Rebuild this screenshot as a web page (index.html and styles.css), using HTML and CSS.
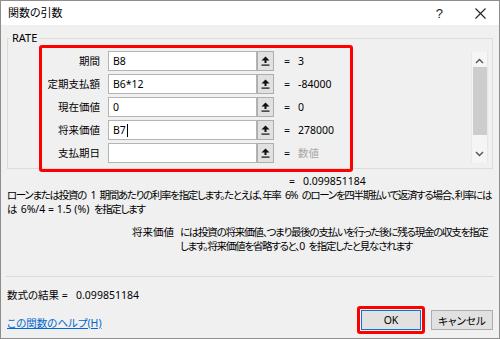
FILE: index.html
```html
<!DOCTYPE html>
<html lang="ja">
<head>
    <meta charset="UTF-8">
    <title>関数の引数</title>
    <link rel="stylesheet" href="styles.css">
</head>
<body>
    <div class="window">
        <div class="titlebar">
            <span class="title">関数の引数</span>
            <span class="help-icon">?</span>
            <svg class="close-icon" width="11" height="11" viewBox="0 0 11 11">
                <path d="M0.5 0.5 L10.5 10.5 M10.5 0.5 L0.5 10.5" stroke="#222" stroke-width="1.1" fill="none"/>
            </svg>
        </div>
        <div class="content">
            <fieldset class="group">
                <legend>RATE</legend>
                <div class="group-inner">
                    <div class="args">
                        <div class="arg-row">
                            <label class="arg-label">期間</label>
                            <div class="arg-input">B8</div>
                            <button class="ref-btn"><svg width="9" height="10" viewBox="0 0 9 10"><path d="M4.5 0.5 L8.5 4.5 L5.5 4.5 L5.5 7 L3.5 7 L3.5 4.5 L0.5 4.5 Z" fill="#111"/><rect x="0.5" y="8.5" width="8" height="1.2" fill="#111"/></svg></button>
                            <span class="eq">=</span>
                            <span class="arg-value">3</span>
                        </div>
                        <div class="arg-row">
                            <label class="arg-label">定期支払額</label>
                            <div class="arg-input">B6*12</div>
                            <button class="ref-btn"><svg width="9" height="10" viewBox="0 0 9 10"><path d="M4.5 0.5 L8.5 4.5 L5.5 4.5 L5.5 7 L3.5 7 L3.5 4.5 L0.5 4.5 Z" fill="#111"/><rect x="0.5" y="8.5" width="8" height="1.2" fill="#111"/></svg></button>
                            <span class="eq">=</span>
                            <span class="arg-value">-84000</span>
                        </div>
                        <div class="arg-row">
                            <label class="arg-label">現在価値</label>
                            <div class="arg-input">0</div>
                            <button class="ref-btn"><svg width="9" height="10" viewBox="0 0 9 10"><path d="M4.5 0.5 L8.5 4.5 L5.5 4.5 L5.5 7 L3.5 7 L3.5 4.5 L0.5 4.5 Z" fill="#111"/><rect x="0.5" y="8.5" width="8" height="1.2" fill="#111"/></svg></button>
                            <span class="eq">=</span>
                            <span class="arg-value">0</span>
                        </div>
                        <div class="arg-row">
                            <label class="arg-label">将来価値</label>
                            <div class="arg-input">B7<span class="caret"></span></div>
                            <button class="ref-btn"><svg width="9" height="10" viewBox="0 0 9 10"><path d="M4.5 0.5 L8.5 4.5 L5.5 4.5 L5.5 7 L3.5 7 L3.5 4.5 L0.5 4.5 Z" fill="#111"/><rect x="0.5" y="8.5" width="8" height="1.2" fill="#111"/></svg></button>
                            <span class="eq">=</span>
                            <span class="arg-value">278000</span>
                        </div>
                        <div class="arg-row">
                            <label class="arg-label">支払期日</label>
                            <div class="arg-input"></div>
                            <button class="ref-btn"><svg width="9" height="10" viewBox="0 0 9 10"><path d="M4.5 0.5 L8.5 4.5 L5.5 4.5 L5.5 7 L3.5 7 L3.5 4.5 L0.5 4.5 Z" fill="#111"/><rect x="0.5" y="8.5" width="8" height="1.2" fill="#111"/></svg></button>
                            <span class="eq">=</span>
                            <span class="arg-value muted">数値</span>
                        </div>
                    </div>
                    <div class="scrollbar">
                        <svg class="chevron" width="9" height="6" viewBox="0 0 9 6"><path d="M1 5 L4.5 1.5 L8 5" stroke="#555" stroke-width="1.4" fill="none"/></svg>
                        <div class="thumb"></div>
                        <svg class="chevron down" width="9" height="6" viewBox="0 0 9 6"><path d="M1 1 L4.5 4.5 L8 1" stroke="#555" stroke-width="1.4" fill="none"/></svg>
                    </div>
                </div>
            </fieldset>

            <div class="result-row">
                <span class="eq">=</span>
                <span class="arg-value">0.099851184</span>
            </div>

            <p class="desc">ローンまたは投資の 1 期間あたりの利率を指定します。たとえば、年率 6% のローンを四半期払いで返済する場合、利率には<br>は <span class="latin">6%/4 = 1.5 (%)</span> を指定します</p>

            <div class="param-desc">
                <span class="param-name">将来価値</span>
                <span class="param-text">には投資の将来価値、つまり最後の支払いを行った後に残る現金の収支を指定<br>します。将来価値を省略すると、0 を指定したと見なされます</span>
            </div>

            <div class="separator"></div>

            <div class="formula">数式の結果 =&nbsp;&nbsp; 0.099851184</div>

            <div class="footer">
                <a href="#" class="help-link">この関数のヘルプ(H)</a>
                <div class="buttons">
                    <span class="focus-mark"><button class="btn btn-ok">OK</button></span>
                    <button class="btn">キャンセル</button>
                </div>
            </div>
        </div>
    </div>
</body>
</html>
```

FILE: styles.css
```css
body {
    margin: 0;
    font-family: "Noto Sans", "Noto Sans CJK JP", sans-serif;
    font-size: 10.5px;
    color: #000;
    font-feature-settings: "palt";
}

.window {
    width: 500px;
    height: 339px;
    box-sizing: border-box;
    border: 1px solid #8e8e8e;
    background-color: #f0f0f0;
    display: flex;
    flex-direction: column;
    overflow: hidden;
}

.titlebar {
    flex-shrink: 0;
    height: 24px;
    background-color: #fff;
    display: flex;
    align-items: center;
    padding-left: 7px;
    padding-right: 13px;
}

.title {
    flex: 1;
    font-size: 11px;
    line-height: 14px;
}

.help-icon {
    font-family: "Liberation Sans", sans-serif;
    font-size: 13px;
    color: #222;
    margin-right: 32px;
}

.close-icon {
    display: block;
}

.content {
    flex: 1;
    padding: 6px 6px 0 5px;
    display: flex;
    flex-direction: column;
}

.group {
    flex-shrink: 0;
    margin: 0 0 0 1px;
    padding: 0;
    border: 1px solid #dcdcdc;
    min-width: 0;
}

.group legend {
    margin-left: 2px;
    padding: 0 2px;
    line-height: 14px;
    font-size: 11px;
}

.group-inner {
    display: flex;
    align-items: flex-start;
}

.args {
    margin-left: 31px;
    margin-bottom: -4px;
    width: 308px;
    height: 118px;
    border: 3px solid #f00;
    border-radius: 3px;
    padding-top: 3px;
    display: flex;
    flex-direction: column;
    gap: 3px;
    position: relative;
    z-index: 1;
}

.arg-row {
    display: flex;
    align-items: center;
    height: 20px;
}

.arg-label {
    width: 58px;
    text-align: right;
    margin-right: 8px;
    line-height: 14px;
    white-space: nowrap;
}

.arg-input {
    width: 143px;
    height: 18px;
    border: 1px solid #b4b4b4;
    background-color: #fff;
    line-height: 18px;
    padding-left: 4px;
    display: flex;
    align-items: center;
}

.caret {
    display: inline-block;
    width: 1px;
    height: 13px;
    background-color: #000;
    margin-left: 1px;
}

.ref-btn {
    width: 17px;
    height: 20px;
    padding: 0;
    margin: 0;
    border: 1px solid #adadad;
    background-color: #e1e1e1;
    display: flex;
    align-items: center;
    justify-content: center;
}

.ref-btn svg {
    display: block;
}

.eq {
    margin-left: 10px;
    width: 14px;
    line-height: 14px;
}

.arg-value {
    line-height: 14px;
}

.muted {
    color: #a6a6a6;
}

.scrollbar {
    margin-left: auto;
    margin-right: 4px;
    margin-top: 7px;
    width: 15px;
    height: 111px;
    border-left: 1px solid #e8e8e8;
    border-right: 1px solid #e8e8e8;
    background-color: #f5f5f5;
    display: flex;
    flex-direction: column;
    align-items: center;
}

.chevron {
    display: block;
    margin-top: 6px;
}

.chevron.down {
    margin-top: auto;
    margin-bottom: 6px;
}

.thumb {
    width: 14px;
    height: 68px;
    margin-top: 3px;
    background-color: #cdcdcd;
}

.result-row {
    display: flex;
    margin-top: 5px;
    padding-left: 273px;
    line-height: 14px;
}

.desc {
    margin: 0;
    line-height: 14px;
    padding-left: 1px;
    white-space: nowrap;
    letter-spacing: -1.3px;
    word-spacing: 3px;
}

.desc .latin {
    letter-spacing: 0;
    word-spacing: 0;
}

.param-desc {
    display: flex;
    margin-top: 9px;
    line-height: 14px;
    padding-left: 126px;
}

.param-name {
    flex-shrink: 0;
    width: 48px;
    white-space: nowrap;
}

.param-text {
    white-space: nowrap;
    letter-spacing: -1.25px;
    word-spacing: 3px;
}

.separator {
    flex-shrink: 0;
    margin-top: 23px;
    height: 1px;
    background-color: #dadada;
    margin-right: -1px;
}

.formula {
    margin-top: 11px;
    line-height: 14px;
    padding-left: 1px;
}

.footer {
    display: flex;
    justify-content: space-between;
    margin-top: 4px;
    padding-left: 1px;
}

.help-link {
    align-self: flex-end;
    margin-bottom: 4px;
    color: #0066cc;
    line-height: 14px;
}

.buttons {
    display: flex;
    align-items: center;
    gap: 6px;
}

.focus-mark {
    border: 3px solid #f00;
    border-radius: 3px;
    padding: 1px;
    display: flex;
}

.btn {
    height: 20px;
    width: 62px;
    padding: 0;
    border: 1px solid #adadad;
    background-color: #e1e1e1;
    font-family: "Noto Sans", "Noto Sans CJK JP", sans-serif;
    font-size: 10.5px;
    font-feature-settings: "palt";
    color: #000;
}

.btn-ok {
    width: 60px;
    border-color: #0078d7;
}
```
